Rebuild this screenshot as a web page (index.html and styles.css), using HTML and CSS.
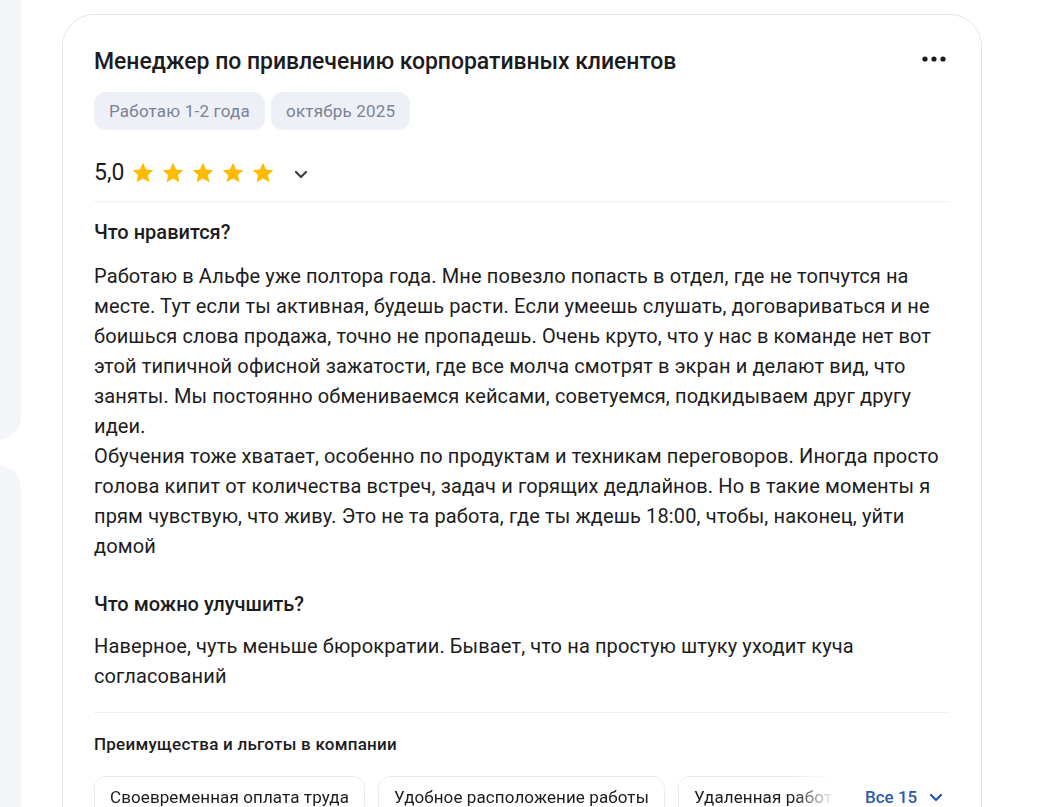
FILE: index.html
```html
<!DOCTYPE html>
<html lang="ru">
<head>
<meta charset="utf-8">
<link rel="stylesheet" href="styles.css">
</head>
<body>
<div class="page">
  <aside class="side">
    <div class="side-card side-card-top"></div>
    <div class="side-card side-card-bottom"></div>
  </aside>
  <article class="review">
    <header class="review-head">
      <h2 class="review-title">Менеджер по привлечению корпоративных клиентов</h2>
      <button class="more" aria-label="Ещё">
        <svg width="24" height="6" viewBox="0 0 24 6"><circle cx="3" cy="3" r="2.6" fill="#1c1c1e"/><circle cx="12" cy="3" r="2.6" fill="#1c1c1e"/><circle cx="21" cy="3" r="2.6" fill="#1c1c1e"/></svg>
      </button>
    </header>
    <div class="tags">
      <span class="tag">Работаю 1-2 года</span>
      <span class="tag">октябрь 2025</span>
    </div>
    <div class="rating">
      <span class="rating-value">5,0</span>
      <span class="stars">
        <svg class="star" viewBox="0 0 24 24"><path d="M12 1.8l3.05 6.6 7.2.8-5.35 4.9 1.5 7.1L12 17.6l-6.4 3.6 1.5-7.1L1.75 9.2l7.2-.8z"/></svg>
        <svg class="star" viewBox="0 0 24 24"><path d="M12 1.8l3.05 6.6 7.2.8-5.35 4.9 1.5 7.1L12 17.6l-6.4 3.6 1.5-7.1L1.75 9.2l7.2-.8z"/></svg>
        <svg class="star" viewBox="0 0 24 24"><path d="M12 1.8l3.05 6.6 7.2.8-5.35 4.9 1.5 7.1L12 17.6l-6.4 3.6 1.5-7.1L1.75 9.2l7.2-.8z"/></svg>
        <svg class="star" viewBox="0 0 24 24"><path d="M12 1.8l3.05 6.6 7.2.8-5.35 4.9 1.5 7.1L12 17.6l-6.4 3.6 1.5-7.1L1.75 9.2l7.2-.8z"/></svg>
        <svg class="star" viewBox="0 0 24 24"><path d="M12 1.8l3.05 6.6 7.2.8-5.35 4.9 1.5 7.1L12 17.6l-6.4 3.6 1.5-7.1L1.75 9.2l7.2-.8z"/></svg>
      </span>
      <svg class="chev" width="14" height="9" viewBox="0 0 14 9"><path d="M2 2l5 5 5-5" fill="none" stroke="#3c3c3e" stroke-width="2.2" stroke-linecap="round" stroke-linejoin="round"/></svg>
    </div>
    <hr class="divider">
    <section class="block">
      <h3 class="block-title">Что нравится?</h3>
      <p class="block-text">Работаю в Альфе уже полтора года. Мне повезло попасть в отдел, где не топчутся на месте. Тут если ты активная, будешь расти. Если умеешь слушать, договариваться и не боишься слова продажа, точно не пропадешь. Очень круто, что у нас в команде нет вот этой типичной офисной зажатости, где все молча смотрят в экран и делают вид, что заняты. Мы постоянно обмениваемся кейсами, советуемся, подкидываем друг другу идеи.<br>Обучения тоже хватает, особенно по продуктам и техникам переговоров. Иногда просто голова кипит от количества встреч, задач и горящих дедлайнов. Но в такие моменты я прям чувствую, что живу. Это не та работа, где ты ждешь 18:00, чтобы, наконец, уйти домой</p>
    </section>
    <section class="block block-second">
      <h3 class="block-title">Что можно улучшить?</h3>
      <p class="block-text">Наверное, чуть меньше бюрократии. Бывает, что на простую штуку уходит куча согласований</p>
    </section>
    <hr class="divider divider-benefits">
    <section class="benefits">
      <h4 class="benefits-title">Преимущества и льготы в компании</h4>
      <div class="benefits-row">
        <div class="benefit-list">
          <span class="benefit">Своевременная оплата труда</span>
          <span class="benefit">Удобное расположение работы</span>
          <span class="benefit">Удаленная работа</span>
        </div>
        <button class="all-link">Все 15
          <svg width="14" height="9" viewBox="0 0 14 9"><path d="M2 2l5 5 5-5" fill="none" stroke="#2d5ba6" stroke-width="2.4" stroke-linecap="round" stroke-linejoin="round"/></svg>
        </button>
      </div>
    </section>
  </article>
</div>
</body>
</html>
```

FILE: styles.css
```css
* { box-sizing: border-box; }
html, body { margin: 0; padding: 0; background: #ffffff; }
body {
  font-family: Roboto, "Noto Sans", "Liberation Sans", sans-serif;
  color: #1c1c1e;
  width: 1062px;
  height: 807px;
  overflow: hidden;
}
.page {
  display: flex;
  align-items: flex-start;
  gap: 41px;
  padding-top: 14px;
}
.side {
  width: 21px;
  flex: none;
  display: flex;
  flex-direction: column;
  gap: 25px;
  margin-top: -60px;
  overflow: hidden;
}
.side-card {
  width: 60px;
  margin-left: -39px;
  background: #f3f5f9;
  border-radius: 24px;
}
.side-card-top { height: 486px; }
.side-card-bottom { height: 500px; }

.review {
  width: 920px;
  flex: none;
  border: 1px solid #e1e5ec;
  border-radius: 32px;
  padding: 32px 31px 40px 31px;
  min-height: 900px;
}
.review-head {
  display: flex;
  justify-content: space-between;
  align-items: center;
}
.review-title {
  margin: 0;
  font-size: 23px;
  line-height: 30px;
  font-weight: 500;
  letter-spacing: -0.05px;
  color: #1c1c1e;
}
.more {
  border: 0;
  background: none;
  padding: 0;
  margin: -6px 4px 0 0;
  width: 24px;
  height: 6px;
  display: flex;
}
.tags {
  display: flex;
  gap: 6px;
  margin-top: 15px;
}
.tag {
  height: 38px;
  line-height: 38px;
  padding: 0 15px;
  background: #eef0f7;
  border-radius: 12px;
  color: #7b8293;
  font-size: 17px;
  letter-spacing: 0.2px;
}
.rating {
  display: flex;
  align-items: center;
  height: 38px;
  margin-top: 24px;
}
.rating-value {
  font-size: 23px;
  line-height: 38px;
  margin-right: 7px;
}
.stars {
  display: flex;
  gap: 6px;
}
.star {
  width: 24px;
  height: 24px;
  fill: #ffbb00;
}
.chev { margin-left: 19px; margin-top: 2px; }
.divider {
  border: 0;
  border-top: 1px solid #eef0f4;
  margin: 9px 0 0 0;
}
.block { margin-top: 18px; }
.block-second { margin-top: 31px; }
.block-title {
  margin: 0;
  font-size: 20px;
  line-height: 24px;
  font-weight: 500;
}
.block-text {
  margin: 17px 0 0 0;
  font-size: 20px;
  line-height: 30px;
  letter-spacing: 0.12px;
  color: #1c1c1e;
}
.block-second .block-text { margin-top: 15px; }
.divider-benefits { margin-top: 21px; }
.benefits { margin-top: 19px; }
.benefits-title {
  margin: 0;
  font-size: 17px;
  line-height: 24px;
  font-weight: 500;
  letter-spacing: 0.25px;
}
.benefits-row {
  display: flex;
  align-items: center;
  margin-top: 20px;
}
.benefit-list {
  display: flex;
  gap: 13px;
  width: 746px;
  overflow: hidden;
  -webkit-mask-image: linear-gradient(to right, #000 700px, transparent 740px);
  mask-image: linear-gradient(to right, #000 700px, transparent 740px);
}
.benefit {
  flex: none;
  height: 42px;
  line-height: 40px;
  padding: 0 15px;
  border: 1px solid #e8ebf1;
  border-radius: 12px;
  font-size: 17px;
  letter-spacing: 0.1px;
  white-space: nowrap;
}
.all-link {
  border: 0;
  background: none;
  padding: 0;
  margin-left: 25px;
  display: flex;
  align-items: center;
  gap: 12px;
  font-family: inherit;
  font-size: 17px;
  font-weight: 500;
  color: #2d5ba6;
}
```
